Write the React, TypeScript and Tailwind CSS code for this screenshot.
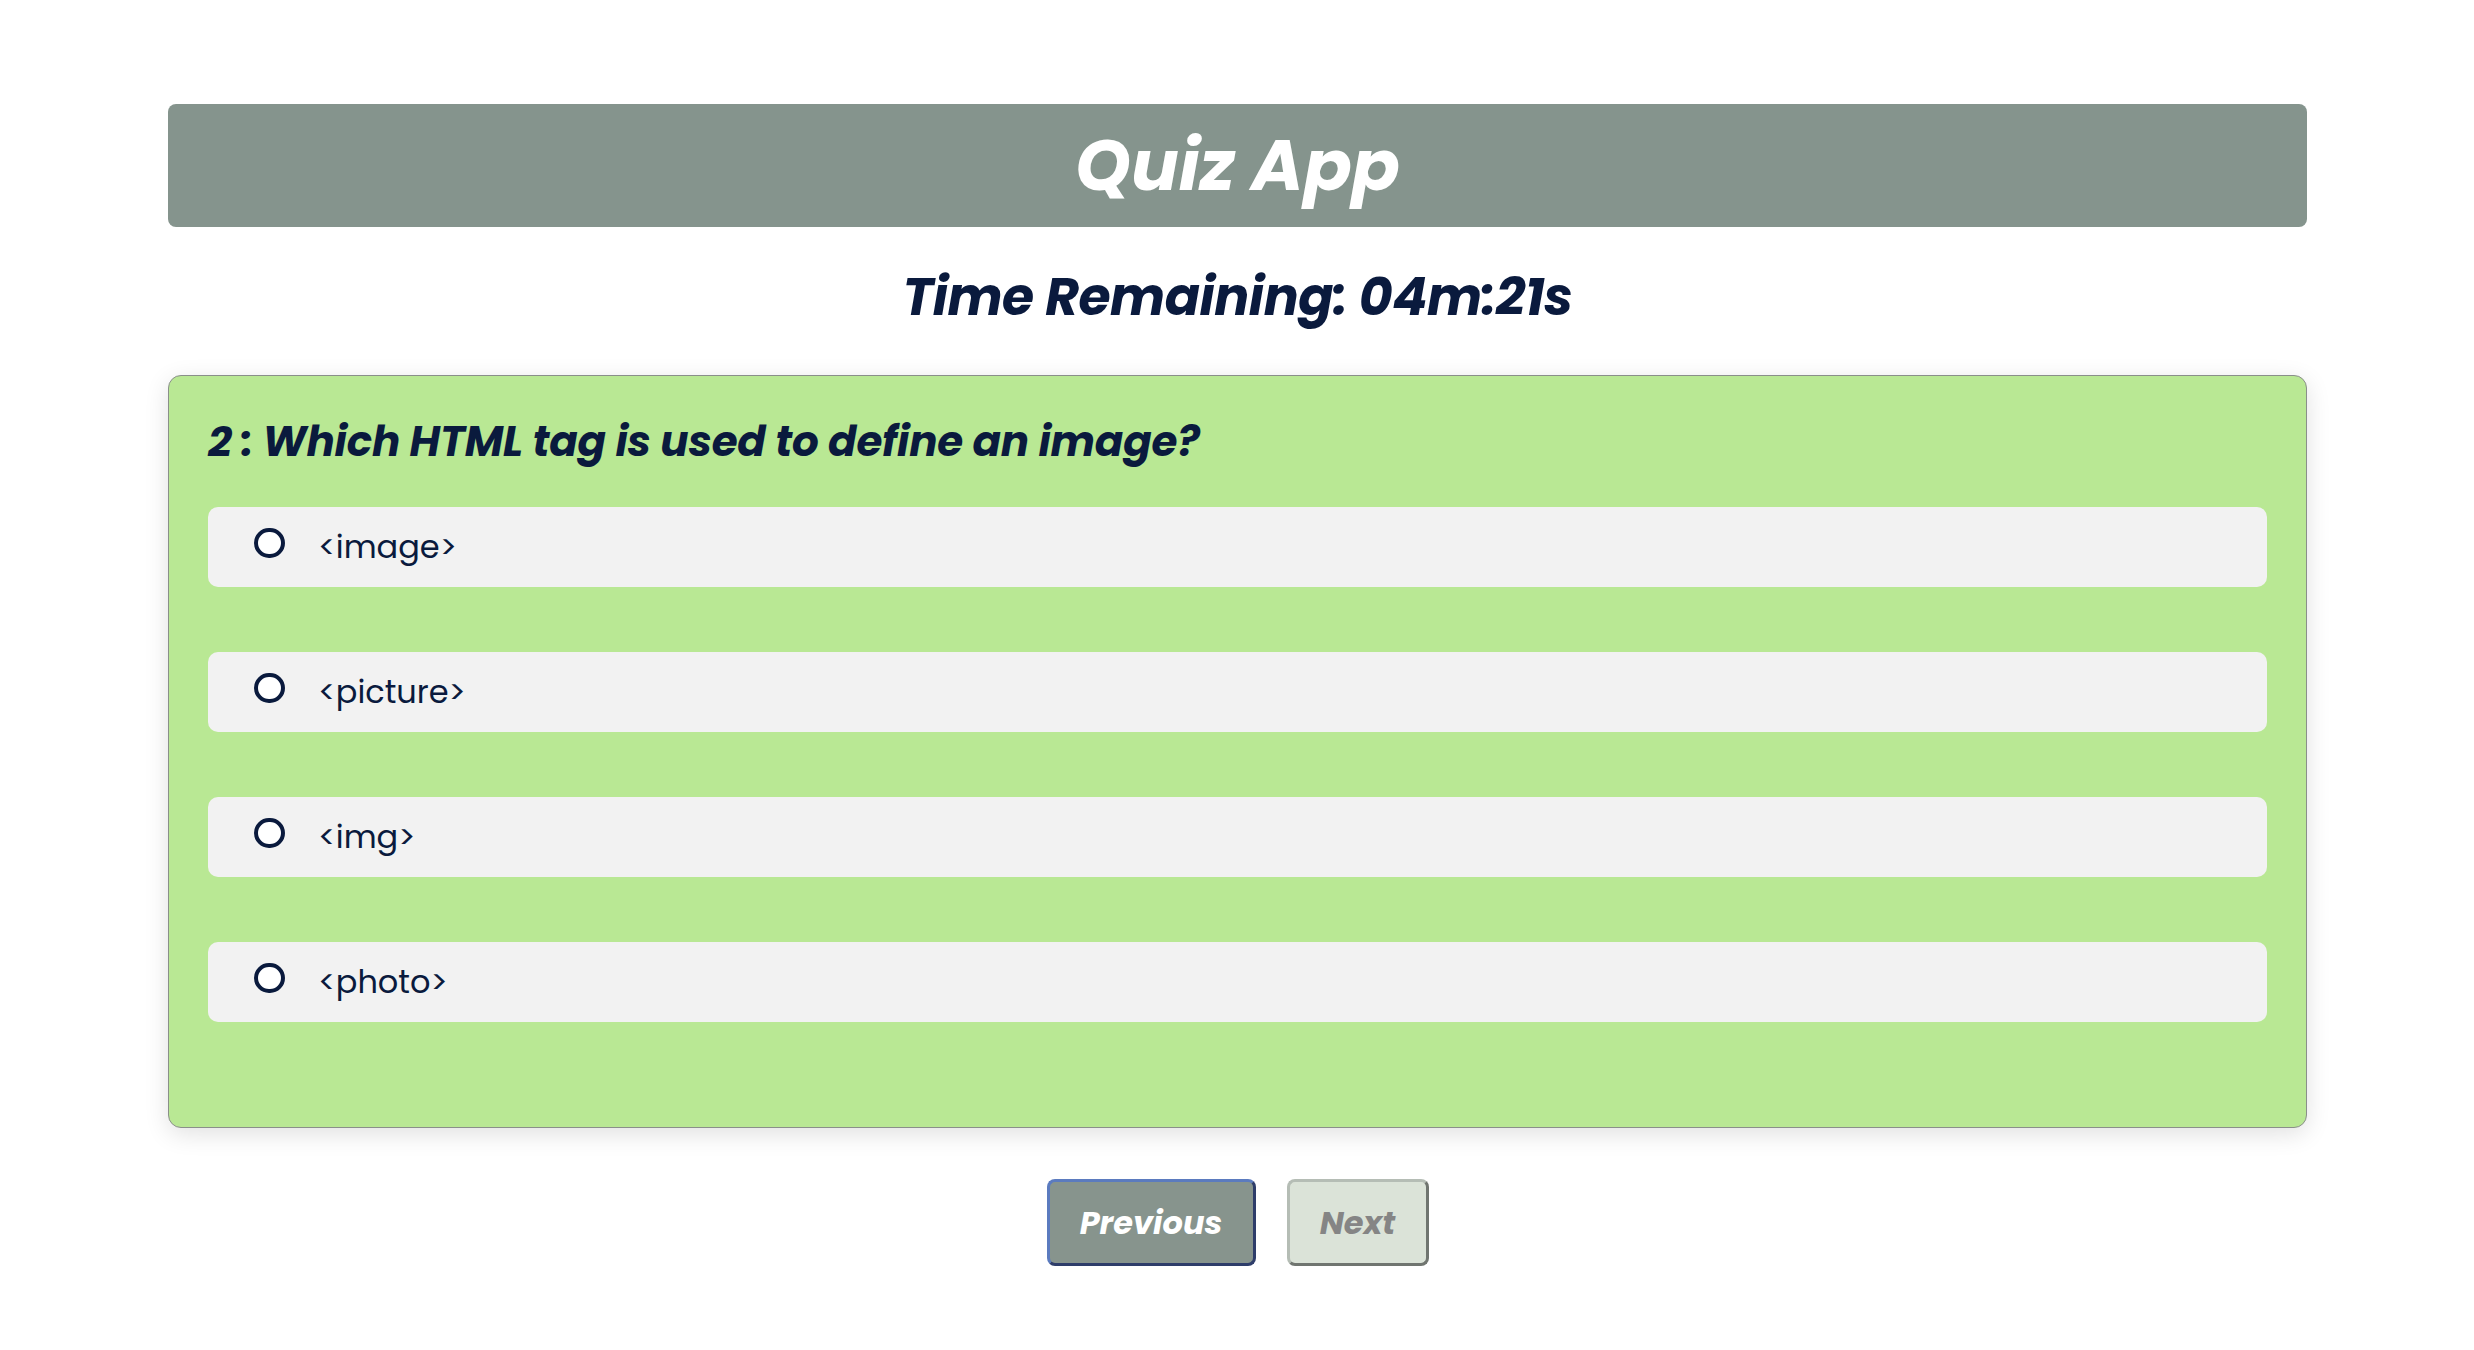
import { useState } from 'react';

const options = ['<image>', '<picture>', '<img>', '<photo>'];

const font = { fontFamily: 'Poppins, Inter, "Open Sans", sans-serif' };

export default function App() {
    const [selected, setSelected] = useState<number | null>(null);

    return (
        <div className="min-h-screen bg-white pl-[168px] pr-[167px] pt-[104px]" style={font}>
            <div className="h-[123px] rounded-[8px] bg-[#85948d] flex items-center justify-center">
                <h1 className="text-[71px] leading-none font-bold italic text-white">Quiz App</h1>
            </div>

            <div className="h-[148px] flex items-center justify-center pb-[8px]">
                <h2 className="text-[52px] leading-none font-bold italic text-[#0a1a3d] tracking-[-0.5px]">
                    Time Remaining: 04m:21s
                </h2>
            </div>

            <div className="bg-[#b9e894] border border-[#8a8f8a] rounded-[13px] shadow-[0_6px_24px_rgba(0,0,0,0.12)] px-[39px] pb-[105px]">
                <div className="h-[131px] flex items-center">
                    <h3 className="text-[42px] leading-none font-bold italic text-[#0a1a3d] tracking-[-0.2px]">
                        2 : Which HTML tag is used to define an image?
                    </h3>
                </div>

                <div className="flex flex-col gap-[65px]">
                    {options.map((opt, i) => (
                        <label
                            key={opt}
                            onClick={() => setSelected(i)}
                            className="h-[80px] rounded-[10px] bg-[#f2f2f2] flex items-center pl-[46px] cursor-pointer"
                        >
                            <span className="w-[31px] h-[30px] -mt-[8px] rounded-full border-[4px] border-[#0a1a3d] bg-white flex items-center justify-center">
                                {selected === i && <span className="w-[13px] h-[13px] rounded-full bg-[#0a1a3d]" />}
                            </span>
                            <span className="ml-[33px] text-[32px] leading-none text-[#0a1a3d]">{opt}</span>
                        </label>
                    ))}
                </div>
            </div>

            <div className="flex justify-center gap-[31px] mt-[51px]">
                <button className="w-[209px] h-[87px] rounded-[8px] bg-[#87948d] border-[3px] border-t-[#5b7bbf] border-l-[#5b7bbf] border-b-[#2e3d6a] border-r-[#2e3d6a] text-[32px] font-bold italic text-white">
                    Previous
                </button>
                <button
                    disabled
                    className="w-[142px] h-[87px] rounded-[8px] bg-[#dbe3d8] border-[3px] border-t-[#b5bdb5] border-l-[#b5bdb5] border-b-[#707570] border-r-[#707570] text-[32px] font-bold italic text-[#858585]"
                >
                    Next
                </button>
            </div>
        </div>
    );
}
